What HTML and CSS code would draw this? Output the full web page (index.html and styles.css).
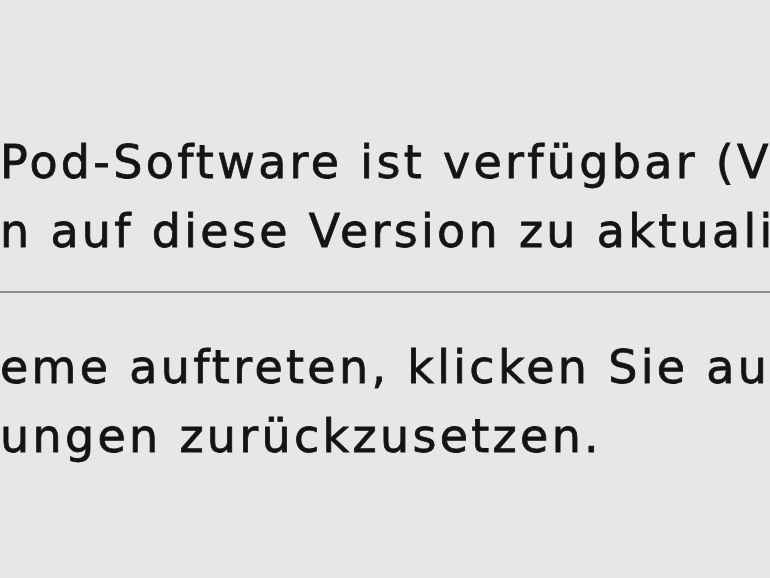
FILE: index.html
```html
<!DOCTYPE html>
<html lang="de">
<head>
<meta charset="utf-8">
<link rel="stylesheet" href="styles.css">
</head>
<body>
<div class="panel">
  <section class="block block-top">
    <p class="line">Pod-Software ist verfügbar (Version 1.1.2).</p>
    <p class="line">n auf diese Version zu aktualisieren.</p>
  </section>
  <hr class="divider">
  <section class="block block-bottom">
    <p class="line">eme auftreten, klicken Sie auf „Wiederherstellen“,</p>
    <p class="line">ungen zurückzusetzen.</p>
  </section>
</div>
</body>
</html>
```
FILE: styles.css
```css
html, body {
  margin: 0;
  padding: 0;
  background: #e7e7e7;
  width: 770px;
  height: 578px;
  overflow: hidden;
}
.panel {
  width: 770px;
  height: 578px;
  overflow: hidden;
  font-family: "DejaVu Sans", "Liberation Sans", sans-serif;
  font-size: 46px;
  letter-spacing: 3.3px;
  color: #141414;
}
.block-top {
  padding-top: 128px;
}
.line {
  margin: 0;
  line-height: 69px;
  white-space: nowrap;
  -webkit-text-stroke: 0.8px #141414;
  filter: blur(0.6px);
}
.divider {
  margin: 25px 0 0 0;
  border: 0;
  height: 2px;
  background: #8c8c8c;
  filter: blur(0.4px);
}
.block-bottom {
  padding-top: 40px;
}
```
